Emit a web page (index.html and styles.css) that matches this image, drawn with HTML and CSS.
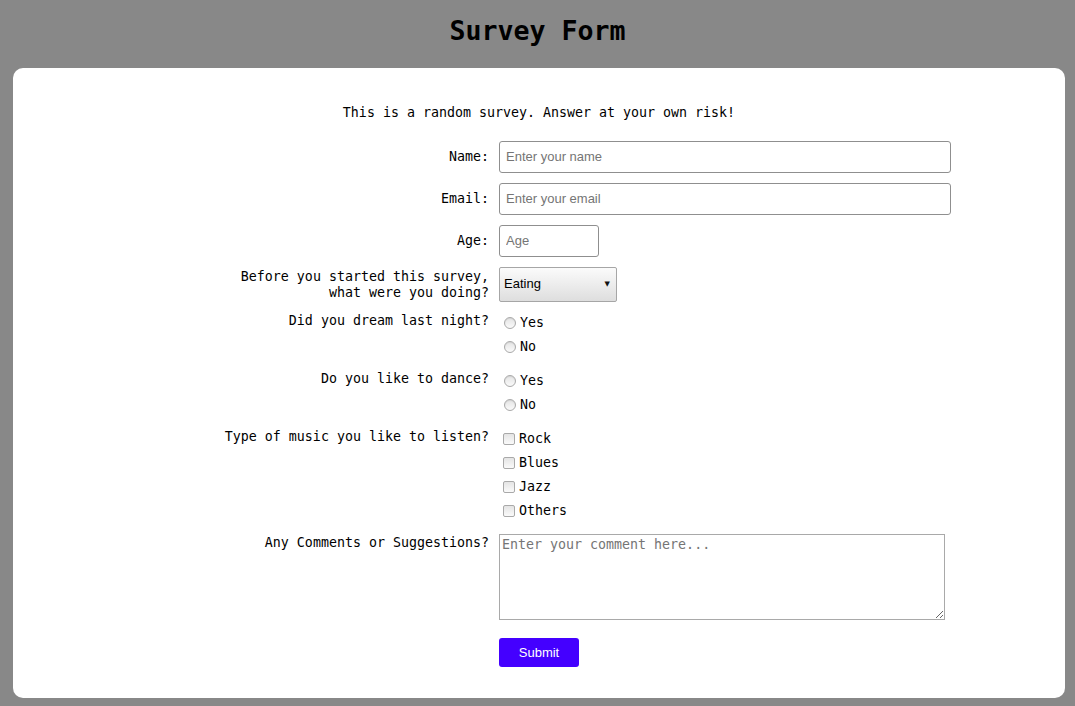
FILE: index.html
```html
<!DOCTYPE html>
<html lang="en">
<head>
<meta charset="utf-8">
<title>Survey Form</title>
<link rel="stylesheet" href="styles.css">
</head>
<body>
<h1 class="title">Survey Form</h1>
<main class="card">
  <p class="intro">This is a random survey. Answer at your own risk!</p>
  <form class="form">
    <label class="lbl lbl-mid" for="name">Name:</label>
    <input class="field field-wide" id="name" type="text" placeholder="Enter your name">

    <label class="lbl lbl-mid" for="email">Email:</label>
    <input class="field field-wide" id="email" type="email" placeholder="Enter your email">

    <label class="lbl lbl-mid" for="age">Age:</label>
    <input class="field field-age" id="age" type="number" placeholder="Age">

    <label class="lbl lbl-mid" for="doing">Before you started this survey,<br>what were you doing?</label>
    <div class="select-wrap">
      <select class="select" id="doing">
        <option>Eating</option>
        <option>Sleeping</option>
        <option>Working</option>
      </select>
      <span class="select-arrow">▼</span>
    </div>

    <div class="lbl lbl-top">Did you dream last night?</div>
    <div class="options">
      <label class="opt"><input class="radio" type="radio" name="dream">Yes</label>
      <label class="opt"><input class="radio" type="radio" name="dream">No</label>
    </div>

    <div class="lbl lbl-top">Do you like to dance?</div>
    <div class="options">
      <label class="opt"><input class="radio" type="radio" name="dance">Yes</label>
      <label class="opt"><input class="radio" type="radio" name="dance">No</label>
    </div>

    <div class="lbl lbl-top">Type of music you like to listen?</div>
    <div class="options">
      <label class="opt"><input class="check" type="checkbox">Rock</label>
      <label class="opt"><input class="check" type="checkbox">Blues</label>
      <label class="opt"><input class="check" type="checkbox">Jazz</label>
      <label class="opt"><input class="check" type="checkbox">Others</label>
    </div>

    <label class="lbl lbl-area" for="comments">Any Comments or Suggestions?</label>
    <textarea class="area" id="comments" placeholder="Enter your comment here..."></textarea>

    <div class="spacer"></div>
    <div class="submit-cell"><button class="submit" type="submit">Submit</button></div>
  </form>
</main>
</body>
</html>
```

FILE: styles.css
```css
* { box-sizing: border-box; }

body {
  margin: 0;
  background: #888888;
  font-family: "DejaVu Sans Mono", "Liberation Mono", monospace;
  font-size: 13.3px;
  color: #000;
}

.title {
  margin: 0;
  height: 68px;
  padding-top: 15px;
  text-align: center;
  font-size: 26.6px;
  font-weight: bold;
  line-height: 32px;
}

.card {
  margin: 0 10px 8px 13px;
  height: 630px;
  background: #fff;
  border-radius: 10px;
  padding-top: 37px;
}

.intro {
  margin: 0 0 20px;
  text-align: center;
  line-height: 16px;
}

.form {
  display: grid;
  grid-template-columns: 476px 1fr;
  column-gap: 10px;
  row-gap: 10px;
}

.lbl {
  text-align: right;
  line-height: 16px;
}
.lbl-mid { align-self: center; }
.lbl-top { align-self: start; padding-top: 1px; }
.lbl-area { align-self: start; padding-top: 1px; }

.field {
  height: 32px;
  border: 1px solid #8f8f8f;
  border-radius: 3px;
  padding: 0 6px 2px;
  font-family: "Liberation Sans", Arial, sans-serif;
  font-size: 13px;
  color: #000;
  background: #fff;
}
.field::placeholder { color: #757575; }
.field-wide { width: 452px; }
.field-age { width: 100px; -moz-appearance: textfield; }
.field-age::-webkit-inner-spin-button,
.field-age::-webkit-outer-spin-button { -webkit-appearance: none; margin: 0; }

.select-wrap {
  position: relative;
  width: 118px;
  height: 35px;
}
.select {
  -webkit-appearance: none;
  appearance: none;
  width: 118px;
  height: 35px;
  border: 1px solid #a6a6a6;
  border-radius: 2px;
  background: linear-gradient(#fbfbfb, #dedede);
  padding: 0 4px 2px;
  font-family: "Liberation Sans", Arial, sans-serif;
  font-size: 13px;
  color: #000;
}
.select-arrow {
  position: absolute;
  right: 7px;
  top: 11px;
  font-family: "DejaVu Sans", sans-serif;
  font-size: 7px;
  line-height: 12px;
  color: #111;
  pointer-events: none;
}

.options {
  display: flex;
  flex-direction: column;
}
.opt {
  height: 24px;
  padding-bottom: 2px;
  display: flex;
  align-items: center;
  line-height: 16px;
}

.radio {
  -webkit-appearance: none;
  appearance: none;
  width: 12px;
  height: 12px;
  margin: 0 4px 0 5px;
  border-radius: 50%;
  border: 1px solid #a9a9a9;
  background: linear-gradient(#e4e4e4, #fafafa);
  box-shadow: inset 0 1px 1px rgba(0,0,0,0.08);
}
.check {
  -webkit-appearance: none;
  appearance: none;
  width: 12px;
  height: 12px;
  margin: 0 4px 0 4px;
  border-radius: 2px;
  border: 1px solid #a9a9a9;
  background: linear-gradient(#e4e4e4, #fafafa);
}

.area {
  width: 446px;
  height: 86px;
  margin-top: 0;
  border: 1px solid #a9a9a9;
  border-radius: 0;
  padding: 2px 2px;
  font-family: "DejaVu Sans Mono", "Liberation Mono", monospace;
  font-size: 13.3px;
  line-height: 16px;
  resize: both;
}
.area::placeholder { color: #757575; }

.submit-cell { padding-top: 8px; }
.submit {
  width: 80px;
  height: 29px;
  border: none;
  border-radius: 3px;
  background: #4400ff;
  color: #fff;
  font-family: "Liberation Sans", Arial, sans-serif;
  font-size: 13px;
}
```
